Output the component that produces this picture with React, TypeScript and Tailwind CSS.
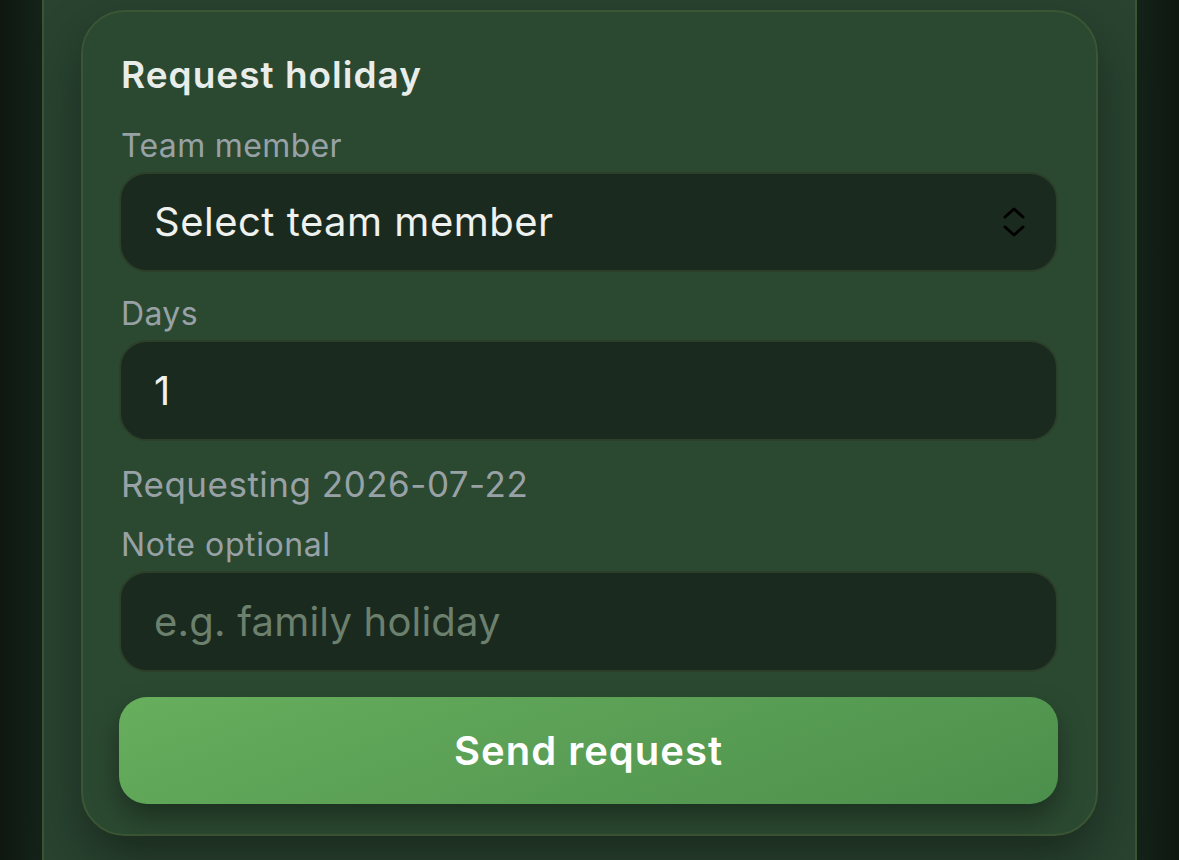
import React from "react";

function Chevrons() {
  return (
    <svg width="24" height="36" viewBox="0 0 24 36" fill="none" stroke="#000" strokeWidth="3" strokeLinecap="round" strokeLinejoin="round">
      <path d="M3 13 L12 5 L21 13" />
      <path d="M3 23 L12 31 L21 23" />
    </svg>
  );
}

export default function App() {
  return (
    <div
      className="h-[860px] w-full overflow-hidden bg-[linear-gradient(90deg,#0e1710_0%,#142319_3.5%,#142319_96.5%,#0e1710_100%)] flex justify-center"
      style={{ fontFamily: "Inter, 'Noto Sans', sans-serif" }}
    >
      <div className="w-[1095px] h-full border-x-2 border-[#3a5434] bg-[#294330] px-[37px] pt-[10px]">
        <div className="rounded-[44px] border-2 border-[#3b5634] bg-[#2b4931] pl-[36px] pr-[38px] pt-[41px] pb-[30px] shadow-[0_24px_50px_rgba(0,0,0,0.35)] flex flex-col">
          <div className="pl-[2px] text-[37px] leading-[44px] font-semibold text-[#e9ede9] tracking-[1px]">Request holiday</div>

          <div className="pl-[2px] mt-[31px] text-[32px] leading-[36px] text-[#98a2a6] tracking-[0.35px]">Team member</div>
          <div className="mt-[8px] h-[100px] rounded-[28px] border-2 border-[#2c3f29] bg-[#1b2a1e] flex items-center justify-between pl-[33px] pr-[30px]">
            <span className="text-[40px] text-[#eef1ee] tracking-[0.5px]">Select team member</span>
            <Chevrons />
          </div>

          <div className="pl-[2px] mt-[24px] text-[32px] leading-[36px] text-[#98a2a6] tracking-[0.35px]">Days</div>
          <input
            readOnly
            value="1"
            className="mt-[8px] h-[101px] w-full rounded-[28px] border-2 border-[#2c3f29] bg-[#1b2a1e] pl-[33px] text-[40px] text-[#eef1ee] outline-none"
          />

          <div className="pl-[2px] mt-[23px] text-[35px] leading-[40px] text-[#98a2a6] tracking-[0.5px]">Requesting 2026-07-22</div>

          <div className="pl-[2px] mt-[23px] text-[32px] leading-[36px] text-[#98a2a6] tracking-[0.6px]">Note optional</div>
          <input
            readOnly
            placeholder="e.g. family holiday"
            className="mt-[8px] h-[101px] w-full rounded-[28px] border-2 border-[#2c3f29] bg-[#1b2a1e] pl-[33px] text-[40px] tracking-[0.2px] text-[#eef1ee] placeholder:text-[#6c806e] outline-none"
          />

          <button className="mt-[25px] h-[107px] w-full rounded-[28px] bg-[linear-gradient(160deg,#67ae5d_0%,#4c8f4c_100%)] text-[40px] font-semibold tracking-[1px] text-white shadow-[0_14px_28px_rgba(0,0,0,0.35)]">
            Send request
          </button>
        </div>
      </div>
    </div>
  );
}
